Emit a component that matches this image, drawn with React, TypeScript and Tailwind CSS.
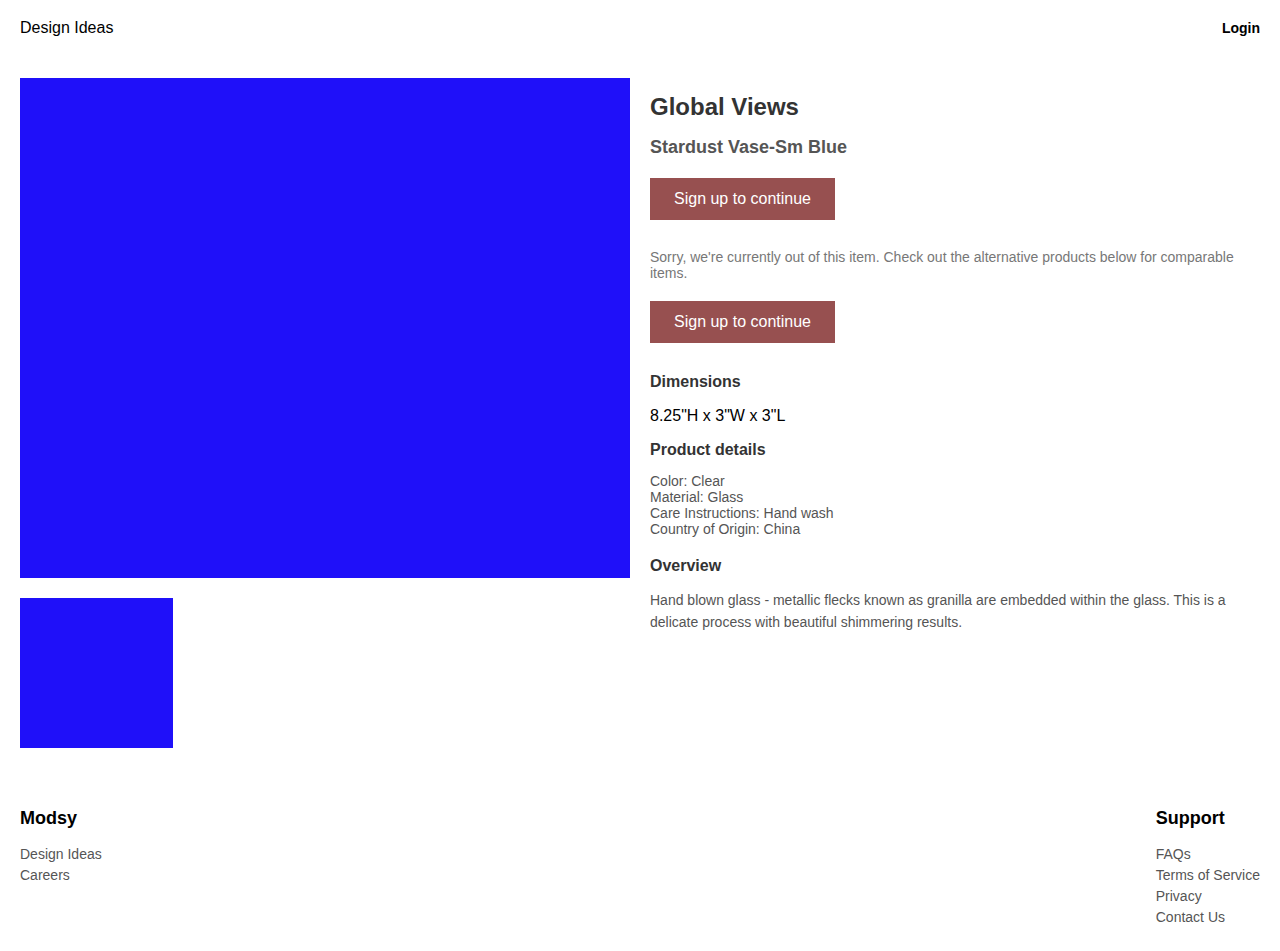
import React from 'react';

const FONT = { fontFamily: '"Liberation Sans", Arial, sans-serif' };

const specs = ['Color: Clear', 'Material: Glass', 'Care Instructions: Hand wash', 'Country of Origin: China'];

function SignUpButton() {
  return (
    <button
      type="button"
      className="block h-[42px] w-[185px] bg-[#975050] text-[16px] leading-[18px] text-white"
    >
      Sign up to continue
    </button>
  );
}

function FooterColumn({ title, links }: { title: string; links: string[] }) {
  return (
    <div>
      <h3 className="text-[18px] font-bold leading-[20px] text-black">{title}</h3>
      <ul className="mt-[16px]">
        {links.map((l) => (
          <li key={l} className="text-[14px] leading-[21px] text-[#555]">
            {l}
          </li>
        ))}
      </ul>
    </div>
  );
}

export default function App() {
  return (
    <div className="min-h-[951px] bg-white px-5" style={FONT}>
      {/* Header */}
      <header className="flex items-center justify-between pt-[19px]">
        <span className="text-[16px] leading-[18px] text-black">Design Ideas</span>
        <span className="text-[14px] font-bold leading-[18px] text-black">Login</span>
      </header>

      {/* Product */}
      <main className="mt-[41px] flex gap-5">
        <div className="w-[610px] shrink-0">
          <div className="h-[500px] w-[610px] bg-[#1f10f9]" />
          <div className="mt-5 h-[150px] w-[153px] bg-[#1f10f9]" />
        </div>

        <div className="flex-1">
          <h1 className="mt-[15px] text-[24px] font-bold leading-[28px] text-[#333]">Global Views</h1>
          <h2 className="mt-[16px] text-[18px] font-bold leading-[20px] text-[#555]">Stardust Vase-Sm Blue</h2>
          <div className="mt-[21px]">
            <SignUpButton />
          </div>
          <p className="mt-[29px] text-[14px] leading-[16px] text-[#777]">
            Sorry, we're currently out of this item. Check out the alternative products below for comparable items.
          </p>
          <div className="mt-[20px]">
            <SignUpButton />
          </div>

          <h4 className="mt-[30px] text-[16px] font-bold leading-[18px] text-[#333]">Dimensions</h4>
          <p className="mt-[16px] text-[16px] leading-[18px] text-black">8.25"H x 3"W x 3"L</p>

          <h4 className="mt-[16px] text-[16px] font-bold leading-[18px] text-[#333]">Product details</h4>
          <div className="mt-[14px]">
            {specs.map((s) => (
              <div key={s} className="text-[14px] leading-[16px] text-[#555]">
                {s}
              </div>
            ))}
          </div>

          <h4 className="mt-[20px] text-[16px] font-bold leading-[18px] text-[#333]">Overview</h4>
          <p className="mt-[14px] text-[14px] leading-[22px] text-[#555]">
            Hand blown glass - metallic flecks known as granilla are embedded within the glass. This is a delicate
            process with beautiful shimmering results.
          </p>
        </div>
      </main>

      {/* Footer */}
      <footer className="mt-[60px] flex justify-between pb-5">
        <FooterColumn title="Modsy" links={['Design Ideas', 'Careers']} />
        <FooterColumn title="Support" links={['FAQs', 'Terms of Service', 'Privacy', 'Contact Us']} />
      </footer>
    </div>
  );
}
